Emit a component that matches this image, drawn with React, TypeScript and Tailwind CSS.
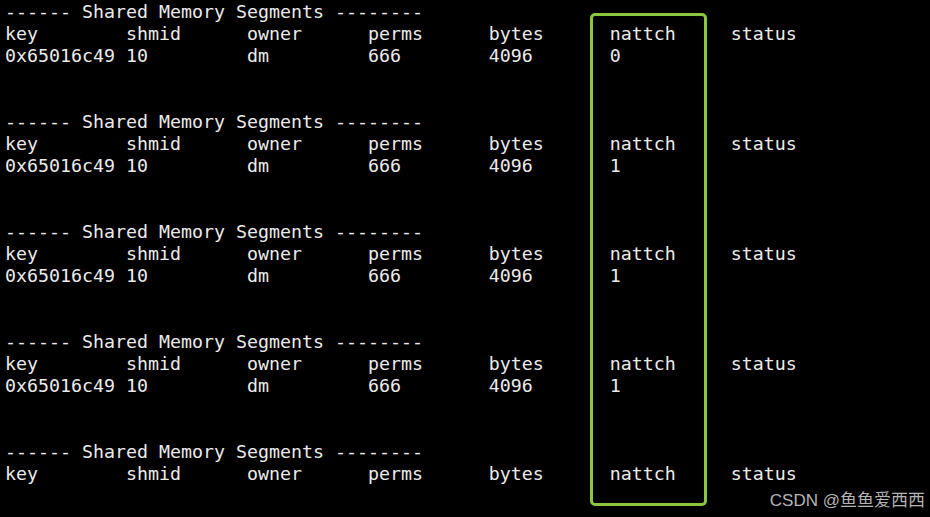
import React from "react";

const block = [
  "------ Shared Memory Segments --------",
  "key        shmid      owner      perms      bytes      nattch     status",
];

const rows = ["0", "1", "1", "1"];

export default function App() {
  const lines: string[] = [];
  rows.forEach((n) => {
    lines.push(block[0]);
    lines.push(block[1]);
    lines.push(`0x65016c49 10         dm         666        4096       ${n}`);
    lines.push("");
    lines.push("");
  });
  lines.push(block[0]);
  lines.push(block[1]);
  return (
    <div className="relative w-[930px] h-[517px] overflow-hidden bg-black">
      <div
        className="pl-[5px] pt-[1px] whitespace-pre text-[18.27px] leading-[22px] text-[#ebebeb]"
        style={{ fontFamily: '"DejaVu Sans Mono", monospace' }}
      >
        {lines.map((l, i) => (
          <div key={i} className="h-[22px]">
            {l}
          </div>
        ))}
      </div>
      <div className="absolute left-[590px] top-[13px] w-[117px] h-[493px] border-[3px] border-[#8cc63f] rounded-[5px]" />
      <div
        className="absolute right-[5px] bottom-[5px] text-[17px] leading-[22px] text-[#b4b4b4]"
        style={{ fontFamily: '"Liberation Sans", "Noto Sans CJK SC", sans-serif' }}
      >
        CSDN @鱼鱼爱西西
      </div>
    </div>
  );
}
